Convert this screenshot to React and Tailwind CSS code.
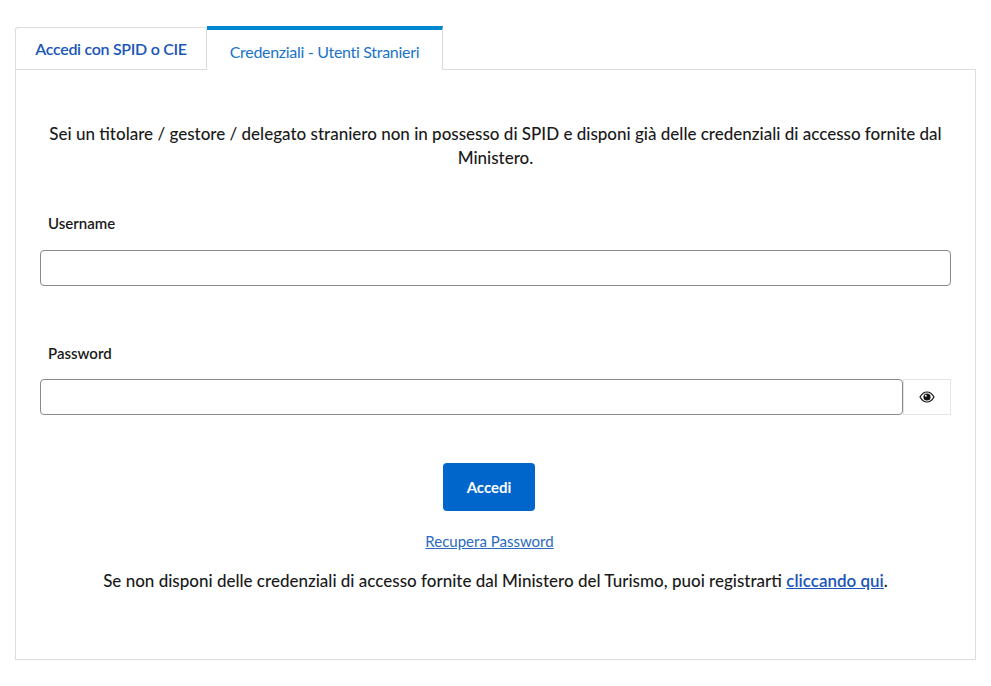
export default function App() {
  return (
    <div className="bg-white px-[15px] pt-[26px] pb-[25px] text-[#1a1a1a]" style={{ fontFamily: "Lato, 'Noto Sans', sans-serif" }}>
      <div className="flex items-end">
        <button className="h-[42px] w-[192px] rounded-t-[3px] border border-b-0 border-[#dcdcdc] bg-white text-[16px] font-semibold tracking-[-0.3px] text-[#1a56b8]">
          Accedi con SPID o CIE
        </button>
        <button className="-mb-px h-[44px] w-[236px] border-t-4 border-r border-t-[#0087d0] border-r-[#dcdcdc] bg-white pt-1 text-[16px] tracking-[-0.3px] text-[#1a73c8]">
          Credenziali - Utenti Stranieri
        </button>
      </div>
      <div className="flex h-[591px] flex-col border border-[#dcdcdc] px-[24px] pt-[52px]">
        <p className="mx-auto max-w-[900px] text-center text-[17px] leading-[24px] font-medium">
          Sei un titolare / gestore / delegato straniero non in possesso di SPID e disponi già delle credenziali di accesso fornite dal Ministero.
        </p>
        <label className="mt-[42px] ml-[8px] text-[15px] font-semibold">Username</label>
        <input className="mt-[15px] h-[36px] w-full rounded-[4px] border border-[#8a8a8a]" />
        <label className="mt-[56px] ml-[8px] text-[15px] font-semibold">Password</label>
        <div className="mt-[15px] flex">
          <input className="h-[36px] flex-1 rounded-[4px] border border-[#8a8a8a]" />
          <button className="flex h-[36px] w-[48px] items-center justify-center border border-[#e4e4e4]">
            <svg width="16" height="12" viewBox="0 0 16 12">
              <path d="M1 6c2-3.5 4.5-5 7-5s5 1.5 7 5c-2 3.5-4.5 5-7 5S3 9.5 1 6z" fill="#fff" stroke="#111" strokeWidth="1.2" />
              <circle cx="8" cy="6" r="3.6" fill="#111" />
              <circle cx="6.8" cy="4.8" r="1" fill="#fff" />
            </svg>
          </button>
        </div>
        <button className="mt-[48px] ml-[403px] h-[48px] w-[92px] rounded-[4px] bg-[#0066cc] text-[15px] font-bold text-white">
          Accedi
        </button>
        <a href="#" className="mx-auto mt-[19px] -translate-x-[6px] text-[15px] text-[#2a6bc0] underline">Recupera Password</a>
        <p className="mt-[15px] text-center text-[17px] font-medium">
          Se non disponi delle credenziali di accesso fornite dal Ministero del Turismo, puoi registrarti{" "}
          <a href="#" className="font-semibold text-[#1a56b8] underline">cliccando qui</a>.
        </p>
      </div>
    </div>
  );
}
